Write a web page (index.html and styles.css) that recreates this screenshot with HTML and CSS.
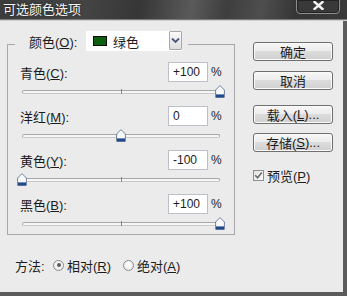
FILE: index.html
```html
<!DOCTYPE html>
<html lang="zh-CN">
<head>
<meta charset="utf-8">
<title>可选颜色选项</title>
<link rel="stylesheet" href="styles.css">
</head>
<body>
<div class="window">
  <div class="titlebar">
    <span class="title">可选颜色选项</span>
    <div class="close">
      <svg width="11" height="9" viewBox="0 0 11 9"><path d="M1.5 1 L9.5 8 M9.5 1 L1.5 8" stroke="#f2f2f2" stroke-width="2.4" stroke-linecap="square" fill="none"/></svg>
    </div>
  </div>
  <div class="main">
    <div class="left">
      <div class="group">
        <div class="legend">
          <span class="label">颜色(<u>O</u>):</span>
          <div class="select">
            <span class="swatch"></span><span class="opt-text">绿色</span>
            <span class="arrow"><svg width="9" height="7" viewBox="0 0 9 7"><path d="M1 1.5 L4.5 5 L8 1.5" stroke="#4a5878" stroke-width="1.8" fill="none"/></svg></span>
          </div>
        </div>
        <div class="fields">
          <div class="field">
            <div class="row"><span class="label">青色(<u>C</u>):</span><span class="input">+100</span><span class="pct">%</span></div>
            <div class="slider"><div class="track"><span class="tick"></span></div><span class="thumb" style="left:calc(100% - 5px)"><svg width="10" height="13" viewBox="0 0 10 13"><path d="M5 0.6 L9.4 5 L9.4 12.4 L0.6 12.4 L0.6 5 Z" fill="#f7f9fb" stroke="#6f819c" stroke-width="1"/><rect x="1" y="9.4" width="8" height="3" fill="#1f4a8c"/></svg></span></div>
          </div>
          <div class="field">
            <div class="row"><span class="label">洋红(<u>M</u>):</span><span class="input">0</span><span class="pct">%</span></div>
            <div class="slider"><div class="track"><span class="tick"></span></div><span class="thumb" style="left:calc(50% - 5px)"><svg width="10" height="13" viewBox="0 0 10 13"><path d="M5 0.6 L9.4 5 L9.4 12.4 L0.6 12.4 L0.6 5 Z" fill="#f7f9fb" stroke="#6f819c" stroke-width="1"/><rect x="1" y="9.4" width="8" height="3" fill="#1f4a8c"/></svg></span></div>
          </div>
          <div class="field">
            <div class="row"><span class="label">黄色(<u>Y</u>):</span><span class="input">-100</span><span class="pct">%</span></div>
            <div class="slider"><div class="track"><span class="tick"></span></div><span class="thumb" style="left:calc(0% - 5px)"><svg width="10" height="13" viewBox="0 0 10 13"><path d="M5 0.6 L9.4 5 L9.4 12.4 L0.6 12.4 L0.6 5 Z" fill="#f7f9fb" stroke="#6f819c" stroke-width="1"/><rect x="1" y="9.4" width="8" height="3" fill="#1f4a8c"/></svg></span></div>
          </div>
          <div class="field">
            <div class="row"><span class="label">黑色(<u>B</u>):</span><span class="input">+100</span><span class="pct">%</span></div>
            <div class="slider"><div class="track"><span class="tick"></span></div><span class="thumb" style="left:calc(100% - 5px)"><svg width="10" height="13" viewBox="0 0 10 13"><path d="M5 0.6 L9.4 5 L9.4 12.4 L0.6 12.4 L0.6 5 Z" fill="#f7f9fb" stroke="#6f819c" stroke-width="1"/><rect x="1" y="9.4" width="8" height="3" fill="#1f4a8c"/></svg></span></div>
          </div>
        </div>
      </div>
      <div class="method">
        <span class="m-label">方法:</span>
        <span class="opt opt-1"><span class="radio checked"></span><span>相对(<u>R</u>)</span></span>
        <span class="opt"><span class="radio"></span><span>绝对(<u>A</u>)</span></span>
      </div>
    </div>
    <div class="right">
      <div class="btn b1">确定</div>
      <div class="btn b2">取消</div>
      <div class="btn b3">载入(<u>L</u>)...</div>
      <div class="btn b4">存储(<u>S</u>)...</div>
      <div class="check-row">
        <span class="checkbox"><svg width="9" height="9" viewBox="0 0 9 9"><path d="M1.2 4.3 L3.6 6.8 L7.8 1.6" stroke="#6a6a6a" stroke-width="1.6" fill="none"/></svg></span>
        <span>预览(<u>P</u>)</span>
      </div>
    </div>
  </div>
</div>
</body>
</html>
```

FILE: styles.css
```css
* { box-sizing: border-box; }
html, body { margin: 0; padding: 0; }
body {
  width: 347px;
  height: 296px;
  overflow: hidden;
  background: #ebebeb;
  font-family: "Liberation Sans", "Noto Sans CJK SC", sans-serif;
  font-size: 13px;
  color: #1c1c1c;
}
u { text-decoration: underline; text-underline-offset: 1px; }

.window {
  width: 347px;
  height: 296px;
  display: flex;
  flex-direction: column;
}

.titlebar {
  flex: none;
  height: 21px;
  display: flex;
  align-items: flex-start;
  padding-left: 3px;
  background:
    linear-gradient(to bottom, transparent 0 19px, #7a7a7a 19px 20px, #cfcfcf 20px 21px),
    linear-gradient(100deg, #3c3c3c 0%, #444 25%, #363636 40%, #5a5a5a 55%, #3e3e3e 65%, #4e4e4e 75%, #353535 85%, #3a3a3a 100%);
}
.title {
  color: #f5f5f5;
  font-family: "Noto Sans CJK SC", sans-serif;
  font-size: 13px;
  line-height: 18px;
  margin-top: 0;
  text-shadow: 0 0 2px rgba(0,0,0,0.6);
}
.close {
  margin-left: auto;
  margin-right: 7px;
  margin-top: -1px;
  width: 44px;
  height: 15px;
  border: 1px solid #8e8e8e;
  border-radius: 0 0 4px 4px;
  background: #393939;
  box-shadow: inset 0 0 0 1px #232323;
  display: flex;
  align-items: center;
  justify-content: center;
  padding-bottom: 2px;
}

.main {
  flex: 1;
  display: flex;
  border-right: 4px solid #5b5b5b;
  border-bottom: 4px solid #5b5b5b;
}

.left {
  width: 235px;
  padding-left: 7px;
  display: flex;
  flex-direction: column;
}

.group {
  margin-top: 23px;
  height: 191px;
  border: 1px solid #a8a8a8;
}
.legend {
  display: flex;
  align-items: center;
  width: max-content;
  height: 20px;
  margin: -14px 0 0 7px;
  padding: 0 6px 0 14px;
  background: #ebebeb;
}
.legend .label { width: 57px; }
.select {
  width: 96px;
  height: 20px;
  background: #fff;
  display: flex;
  align-items: center;
  padding-left: 7px;
}
.swatch {
  width: 14px;
  height: 10px;
  background: #0b5f0d;
  border: 1px solid #0a0a0a;
  margin-right: 6px;
}
.arrow {
  margin-left: auto;
  align-self: flex-start;
  width: 13px;
  height: 19px;
  border: 1px solid #a3a8b2;
  border-radius: 1px;
  background: linear-gradient(#fafafa, #dedede);
  display: flex;
  align-items: center;
  justify-content: center;
}

.fields { padding-top: 11px; }
.row {
  display: flex;
  align-items: center;
  height: 20px;
  padding-left: 12px;
  padding-right: 11px;
}
.row .label { flex: 1; }
.input {
  width: 40px;
  height: 20px;
  background: #fff;
  border: 1px solid #bcc0c6;
  padding-left: 4px;
  display: flex;
  align-items: center;
  font-size: 12px;
}
.pct { width: 12px; margin-left: 3px; font-size: 12px; }

.slider {
  position: relative;
  width: 198px;
  height: 24px;
  margin-left: 14px;
  padding-top: 8px;
}
.track {
  position: relative;
  height: 4px;
  border: 1px solid #a6a6a6;
  border-bottom-color: #c9c9c9;
  border-radius: 2px;
  background: #f6f6f6;
}
.tick {
  position: absolute;
  left: 50%;
  top: -2px;
  width: 1px;
  height: 5px;
  background: #8a8a8a;
}
.thumb {
  position: absolute;
  top: 3px;
  width: 10px;
  height: 13px;
  display: block;
}
.thumb svg { display: block; }

.method {
  display: flex;
  align-items: center;
  height: 20px;
  margin-top: 20px;
  padding-left: 8px;
}
.m-label { width: 38px; }
.opt {
  display: flex;
  align-items: center;
  gap: 3px;
}
.opt-1 { width: 70px; }
.radio {
  width: 11px;
  height: 11px;
  border-radius: 50%;
  border: 1px solid #8b8b8b;
  background: radial-gradient(circle at 50% 40%, #ffffff 0%, #f0f0f0 60%, #d8d8d8 100%);
  display: flex;
  align-items: center;
  justify-content: center;
}
.radio.checked::after {
  content: "";
  width: 4px;
  height: 4px;
  border-radius: 50%;
  background: #5c5c5c;
}

.right {
  width: 80px;
  margin-left: 18px;
  padding-top: 21px;
  display: flex;
  flex-direction: column;
}
.btn {
  height: 19px;
  border: 1px solid #6f6f6f;
  border-radius: 3px;
  background: linear-gradient(#f7f7f7 0%, #ececec 45%, #dcdcdc 50%, #d0d0d0 100%);
  box-shadow: inset 0 0 0 1px #fafafa;
  display: flex;
  align-items: center;
  justify-content: center;
  color: #1c1c1c;
}
.b2 { margin-top: 10px; }
.b3 { margin-top: 15px; }
.b4 { margin-top: 9px; }
.check-row {
  display: flex;
  align-items: center;
  height: 14px;
  margin-top: 16px;
  gap: 3px;
}
.checkbox {
  width: 11px;
  height: 11px;
  border: 1px solid #8f8f8f;
  background: linear-gradient(135deg, #e2e2e2, #fbfbfb);
  display: flex;
  align-items: center;
  justify-content: center;
}
.checkbox svg { display: block; }
```
